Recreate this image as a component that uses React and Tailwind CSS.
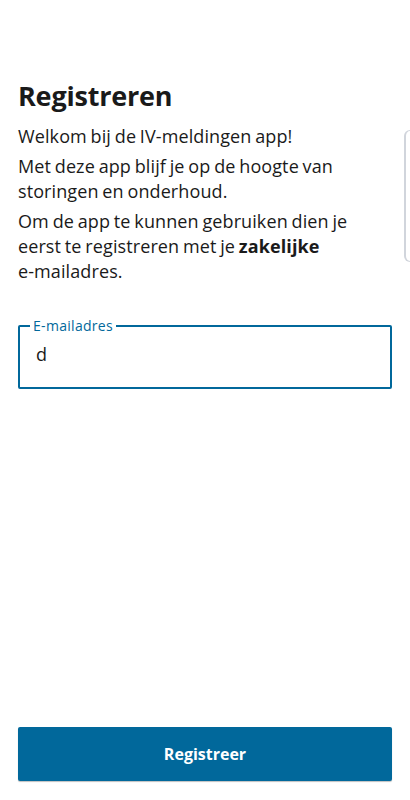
import { useState } from "react";

export default function App() {
  const [email, setEmail] = useState("d");

  return (
    <div
      className="relative flex flex-col w-full h-[800px] bg-white px-[18px] text-[#1a1a1a] overflow-hidden"
      style={{ fontFamily: '"Open Sans", "Noto Sans", sans-serif' }}
    >
      {/* Titel + intro */}
      <h1 className="pt-[80px] text-[27px] leading-[32px] font-bold tracking-[-0.2px]">
        Registreren
      </h1>
      <div className="mt-[12px] flex flex-col gap-[5px] text-[18px] leading-[25px] tracking-[0.1px] [word-spacing:-1px]">
        <p>Welkom bij de IV-meldingen app!</p>
        <p>Met deze app blijf je op de hoogte van storingen en onderhoud.</p>
        <p className="pr-[20px]">
          Om de app te kunnen gebruiken dien je eerst te registreren met je{" "}
          <b className="font-bold">zakelijke</b>{" "}
          <span className="whitespace-nowrap">e-mailadres.</span>
        </p>
      </div>

      {/* E-mailadres */}
      <fieldset className="mt-[34px] h-[71px] border-2 border-[#01689b] rounded-[2px] px-[10px]">
        <legend className="px-[3px] text-[14px] leading-[16px] text-[#01689b] tracking-[0.3px]">
          E-mailadres
        </legend>
        <input
          type="email"
          value={email}
          onChange={(e) => setEmail(e.target.value)}
          autoFocus
          className="w-full h-[44px] -mt-[2px] pl-[6px] text-[18px] text-[#1a1a1a] caret-[#01689b] bg-transparent focus:outline-none"
        />
      </fieldset>

      <div className="flex-1" />

      {/* Knop */}
      <button className="mb-[19px] h-[54px] w-full rounded-[2px] bg-[#01689b] text-white text-[16px] font-bold shadow-[0_1px_1px_rgba(0,0,0,0.25)]">
        Registreer
      </button>

      {/* Edge panel handle */}
      <div className="absolute right-0 top-[130px] h-[132px] w-[6px] border-l-2 border-t border-b border-gray-300 rounded-l-[6px]" />
    </div>
  );
}
